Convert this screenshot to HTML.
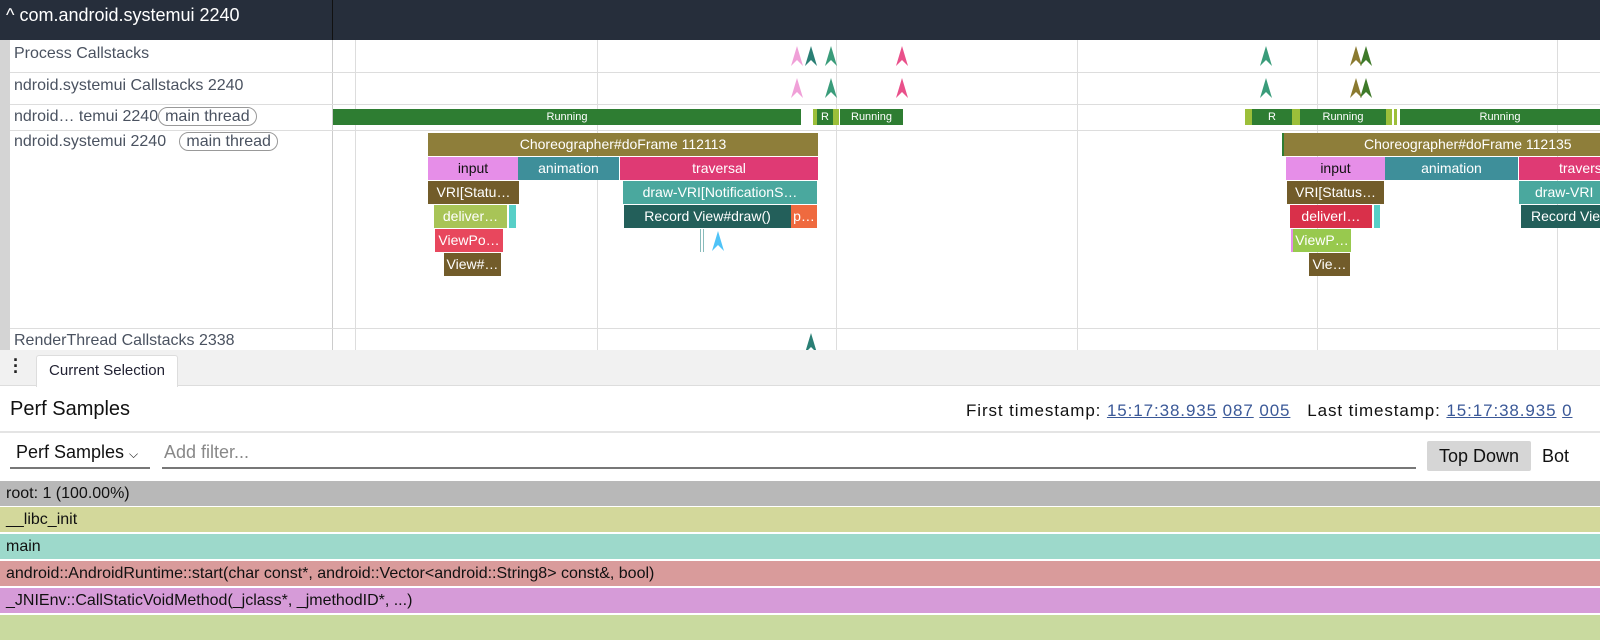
<!DOCTYPE html>
<html><head><meta charset="utf-8">
<style>
*{margin:0;padding:0;box-sizing:border-box}
body{width:1600px;height:632px;overflow:hidden;background:#fff;position:relative;font-family:"Liberation Sans Narrow","Liberation Sans",sans-serif;color:#222}
.a{position:absolute}
.s{position:absolute;color:#fff;font-size:14px;text-align:center;line-height:23px;height:23px;white-space:nowrap;overflow:hidden}
.lbl{position:absolute;left:14px;font-size:16px;color:#4a5260;white-space:nowrap}
.pill{display:inline-block;border:1px solid #999;border-radius:10px;padding:0 6px;line-height:17px;font-size:16px}
.vl{position:absolute;top:40px;width:1px;height:310px;background:#ddd}
.hl{position:absolute;left:10px;width:1590px;height:1px;background:#ddd}
.run{position:absolute;top:109px;height:16px;background:#2e7d32;color:#fff;font-size:11px;text-align:center;line-height:16px;overflow:hidden}
.lt{position:absolute;top:109px;height:16px;background:#9cbf3a}
.fr{position:absolute;left:0;width:1600px;height:25px;font-size:16px;line-height:25px;padding-left:6px;color:#111;white-space:nowrap;overflow:hidden}
a{color:#3b5998;text-decoration:underline}
</style></head><body>
<div class="a" style="left:0;top:0;width:1600px;height:40px;background:#262e3b"></div>
<div class="a" style="left:332px;top:0;width:1px;height:40px;background:#111"></div>
<div class="a" style="left:6px;top:5px;color:#fff;font-size:18px">^ com.android.systemui 2240</div>
<div class="a" style="left:0;top:40px;width:10px;height:310px;background:#d4d4d4"></div>
<div class="a" style="left:332px;top:40px;width:1px;height:310px;background:#ccc"></div>
<div class="vl" style="left:355px"></div><div class="vl" style="left:597px"></div><div class="vl" style="left:836px"></div><div class="vl" style="left:1077px"></div><div class="vl" style="left:1317px"></div><div class="vl" style="left:1557px"></div>
<div class="hl" style="top:72px"></div><div class="hl" style="top:104px"></div><div class="hl" style="top:130px"></div><div class="hl" style="top:328px"></div>
<div class="lbl" style="top:45px">Process Callstacks</div>
<div class="lbl" style="top:77px">ndroid.systemui Callstacks 2240</div>
<div class="lbl" style="top:107px">ndroid… temui 2240<span class="pill">main thread</span></div>
<div class="lbl" style="top:132px">ndroid.systemui 2240 &nbsp; <span class="pill">main thread</span></div>
<div class="lbl" style="top:332px">RenderThread Callstacks 2338</div>

<div class="run" style="left:333px;width:468px">Running</div>
<div class="lt" style="left:813px;width:4px"></div>
<div class="run" style="left:817px;width:16px">R</div>
<div class="lt" style="left:833px;width:6px"></div>
<div class="run" style="left:840px;width:63px">Running</div>
<div class="lt" style="left:1245px;width:7px"></div>
<div class="run" style="left:1252px;width:40px">R</div>
<div class="lt" style="left:1292px;width:8px"></div>
<div class="run" style="left:1300px;width:86px">Running</div>
<div class="lt" style="left:1386px;width:6px"></div>
<div class="lt" style="left:1394px;width:3px"></div>
<div class="run" style="left:1400px;width:200px">Running</div>

<div class="s" style="left:428px;top:133px;width:390px;background:#8e7e3a">Choreographer#doFrame 112113</div>
<div class="s" style="left:428px;top:157px;width:90px;background:#e68ee8;color:#111">input</div>
<div class="s" style="left:518px;top:157px;width:101px;background:#3e8f9a">animation</div>
<div class="s" style="left:620px;top:157px;width:198px;background:#df3a74">traversal</div>
<div class="s" style="left:428px;top:181px;width:91px;background:#725c2a">VRI[Statu…</div>
<div class="s" style="left:623px;top:181px;width:194px;background:#4aa89e">draw-VRI[NotificationS…</div>
<div class="s" style="left:434px;top:205px;width:73px;background:#a8c457">deliver…</div>
<div class="a" style="left:509px;top:205px;width:7px;height:23px;background:#57cfc7"></div>
<div class="s" style="left:624px;top:205px;width:167px;background:#235f5a">Record View#draw()</div>
<div class="s" style="left:791px;top:205px;width:26px;background:#ef6a3f">p…</div>
<div class="s" style="left:435px;top:229px;width:68px;background:#e8475d">ViewPo…</div>
<div class="s" style="left:444px;top:253px;width:57px;background:#725c2a">View#…</div>
<div class="a" style="left:700px;top:229px;width:1px;height:23px;background:#8bb"></div>
<div class="a" style="left:703px;top:229px;width:1px;height:23px;background:#8bb"></div>

<div class="a" style="left:1282px;top:133px;width:2px;height:23px;background:#2e7d32"></div>
<div class="s" style="left:1284px;top:133px;width:316px;background:#8e7e3a;text-align:left;padding-left:80px">Choreographer#doFrame 112135</div>
<div class="s" style="left:1286px;top:157px;width:99px;background:#e68ee8;color:#111">input</div>
<div class="s" style="left:1385px;top:157px;width:133px;background:#3e8f9a">animation</div>
<div class="s" style="left:1519px;top:157px;width:81px;background:#df3a74;text-align:left;padding-left:40px">traversal</div>
<div class="s" style="left:1287px;top:181px;width:97px;background:#725c2a">VRI[Status…</div>
<div class="s" style="left:1519px;top:181px;width:81px;background:#4aa89e;text-align:left;padding-left:16px">draw-VRI</div>
<div class="s" style="left:1290px;top:205px;width:82px;background:#d9304a">deliverI…</div>
<div class="a" style="left:1374px;top:205px;width:6px;height:23px;background:#57cfc7"></div>
<div class="s" style="left:1521px;top:205px;width:79px;background:#235f5a;text-align:left;padding-left:10px">Record View</div>
<div class="a" style="left:1291px;top:229px;width:2px;height:23px;background:#e68ee8"></div>
<div class="s" style="left:1293px;top:229px;width:58px;background:#98c94e">ViewP…</div>
<div class="s" style="left:1309px;top:253px;width:41px;background:#725c2a">Vie…</div>

<svg class="a" style="left:0;top:0" width="1600" height="350">
<defs><path id="ar" d="M0,20 L6,0 L12,20 L6,14 Z"/></defs>
<use href="#ar" x="791" y="46" fill="#f0a0d8"/>
<use href="#ar" x="805" y="46" fill="#2a7f75"/>
<use href="#ar" x="825" y="46" fill="#3a9c7a"/>
<use href="#ar" x="896" y="46" fill="#e9508a"/>
<use href="#ar" x="1260" y="46" fill="#3a9c7a"/>
<use href="#ar" x="1350" y="46" fill="#8a7a30"/>
<use href="#ar" x="1360" y="46" fill="#3f7a2a"/>
<use href="#ar" x="791" y="78" fill="#f0a0d8"/>
<use href="#ar" x="825" y="78" fill="#3a9c7a"/>
<use href="#ar" x="896" y="78" fill="#e9508a"/>
<use href="#ar" x="1260" y="78" fill="#3a9c7a"/>
<use href="#ar" x="1350" y="78" fill="#8a7a30"/>
<use href="#ar" x="1360" y="78" fill="#3f7a2a"/>
<use href="#ar" x="712" y="231" fill="#4fc3f7"/>
<use href="#ar" x="805" y="333" fill="#2a7f75"/>
</svg>

<div class="a" style="left:0;top:350px;width:1600px;height:36px;background:#f1f1f1;border-bottom:1px solid #ddd"></div>
<div class="a" style="left:13px;top:357px;width:6px;height:20px;font-size:18px;line-height:6px;font-weight:bold;color:#222">·<br>·<br>·</div>
<div class="a" style="left:36px;top:355px;width:142px;height:32px;background:#fff;border:1px solid #ddd;border-bottom:none;border-radius:3px 3px 0 0;font-size:15px;color:#223;text-align:center;line-height:30px">Current Selection</div>
<div class="a" style="left:10px;top:398px;font-size:20px;color:#111">Perf Samples</div>
<div class="a" style="left:966px;top:401px;font-size:17px;letter-spacing:0.9px;color:#111;white-space:nowrap">First timestamp: <a>15:17:38.</a><a>935</a> <a>087</a> <a>005</a> &nbsp; Last timestamp: <a>15:17:38.</a><a>935</a> <a>0</a></div>
<div class="a" style="left:0;top:431px;width:1600px;height:2px;background:#e4e4e4"></div>
<div class="a" style="left:10px;top:442px;width:140px;height:27px;border-bottom:2px solid #777;font-size:18px;color:#111;padding-left:6px">Perf Samples <span style="font-size:12px">⌵</span></div>
<div class="a" style="left:162px;top:442px;width:1254px;height:27px;border-bottom:2px solid #777;font-size:18px;color:#888;padding-left:2px">Add filter...</div>
<div class="a" style="left:1427px;top:441px;width:104px;height:30px;background:#d6d6d6;border-radius:2px;font-size:18px;color:#111;text-align:center;line-height:30px">Top Down</div>
<div class="a" style="left:1542px;top:446px;font-size:18px;color:#111">Bot</div>

<div class="fr" style="top:481px;background:#b8b8b8">root: 1 (100.00%)</div>
<div class="fr" style="top:507px;background:#d3d89b">__libc_init</div>
<div class="fr" style="top:534px;background:#9dd9cb">main</div>
<div class="fr" style="top:561px;background:#d99b9b">android::AndroidRuntime::start(char const*, android::Vector&lt;android::String8&gt; const&amp;, bool)</div>
<div class="fr" style="top:588px;background:#d69bd8">_JNIEnv::CallStaticVoidMethod(_jclass*, _jmethodID*, ...)</div>
<div class="fr" style="top:615px;background:#c9da9f"></div>
</body></html>
